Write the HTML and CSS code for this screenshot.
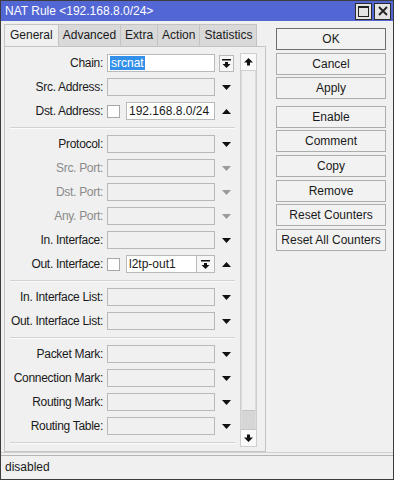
FILE: index.html
```html
<!DOCTYPE html>
<html lang="en">
<head>
    <meta charset="UTF-8">
    <meta name="viewport" content="width=device-width, initial-scale=1.0">
    <title>NAT Rule</title>
    <link rel="stylesheet" href="styles.css">
</head>
<body>
    <div class="window">
        <div class="titlebar">
            <span class="title">NAT Rule &lt;192.168.8.0/24&gt;</span>
            <span class="winbtn"><svg width="11" height="11" viewBox="0 0 11 11"><rect x="0.5" y="0.5" width="10" height="10" fill="none" stroke="#222"/><rect x="0" y="0" width="11" height="2" fill="#222"/></svg></span>
            <span class="winbtn"><svg width="10" height="10" viewBox="0 0 10 10"><path d="M1 1L9 9M9 1L1 9" stroke="#222" stroke-width="1.8"/></svg></span>
        </div>

        <div class="main">
            <div class="left">
                <div class="tabs">
                    <span class="tab active">General</span>
                    <span class="tab">Advanced</span>
                    <span class="tab">Extra</span>
                    <span class="tab">Action</span>
                    <span class="tab">Statistics</span>
                </div>
                <div class="panel">
                    <div class="form">
                        <div class="row">
                            <span class="lbl">Chain:</span>
                            <span class="field white"><span class="sel">srcnat</span></span>
                            <span class="arrow"><span class="ddbtn"><svg width="9" height="9" viewBox="0 0 9 9"><path d="M0 0h9v1.5H0z M3 3h3v2h2.5L4.5 9 0.5 5H3z"/></svg></span></span>
                        </div>
                        <div class="row">
                            <span class="lbl">Src. Address:</span>
                            <span class="field"></span>
                            <span class="arrow"><svg class="tri" width="9" height="5" viewBox="0 0 9 5"><path d="M0 0h9L4.5 5z"/></svg></span>
                        </div>
                        <div class="row">
                            <span class="lbl">Dst. Address:</span>
                            <span class="check"></span>
                            <span class="field white short">192.168.8.0/24</span>
                            <span class="arrow"><svg class="tri" width="9" height="5" viewBox="0 0 9 5"><path d="M0 5h9L4.5 0z"/></svg></span>
                        </div>

                        <div class="sep"></div>

                        <div class="row">
                            <span class="lbl">Protocol:</span>
                            <span class="field"></span>
                            <span class="arrow"><svg class="tri" width="9" height="5" viewBox="0 0 9 5"><path d="M0 0h9L4.5 5z"/></svg></span>
                        </div>
                        <div class="row off">
                            <span class="lbl">Src. Port:</span>
                            <span class="field"></span>
                            <span class="arrow"><svg class="tri" width="9" height="5" viewBox="0 0 9 5"><path d="M0 0h9L4.5 5z"/></svg></span>
                        </div>
                        <div class="row off">
                            <span class="lbl">Dst. Port:</span>
                            <span class="field"></span>
                            <span class="arrow"><svg class="tri" width="9" height="5" viewBox="0 0 9 5"><path d="M0 0h9L4.5 5z"/></svg></span>
                        </div>
                        <div class="row off">
                            <span class="lbl">Any. Port:</span>
                            <span class="field"></span>
                            <span class="arrow"><svg class="tri" width="9" height="5" viewBox="0 0 9 5"><path d="M0 0h9L4.5 5z"/></svg></span>
                        </div>
                        <div class="row">
                            <span class="lbl">In. Interface:</span>
                            <span class="field"></span>
                            <span class="arrow"><svg class="tri" width="9" height="5" viewBox="0 0 9 5"><path d="M0 0h9L4.5 5z"/></svg></span>
                        </div>
                        <div class="row">
                            <span class="lbl">Out. Interface:</span>
                            <span class="check"></span>
                            <span class="field white shorter">l2tp-out1</span>
                            <span class="ddbtn inline"><svg width="9" height="9" viewBox="0 0 9 9"><path d="M0 0h9v1.5H0z M3 3h3v2h2.5L4.5 9 0.5 5H3z"/></svg></span>
                            <span class="arrow"><svg class="tri" width="9" height="5" viewBox="0 0 9 5"><path d="M0 5h9L4.5 0z"/></svg></span>
                        </div>

                        <div class="sep"></div>

                        <div class="row">
                            <span class="lbl">In. Interface List:</span>
                            <span class="field"></span>
                            <span class="arrow"><svg class="tri" width="9" height="5" viewBox="0 0 9 5"><path d="M0 0h9L4.5 5z"/></svg></span>
                        </div>
                        <div class="row">
                            <span class="lbl">Out. Interface List:</span>
                            <span class="field"></span>
                            <span class="arrow"><svg class="tri" width="9" height="5" viewBox="0 0 9 5"><path d="M0 0h9L4.5 5z"/></svg></span>
                        </div>

                        <div class="sep"></div>

                        <div class="row">
                            <span class="lbl">Packet Mark:</span>
                            <span class="field"></span>
                            <span class="arrow"><svg class="tri" width="9" height="5" viewBox="0 0 9 5"><path d="M0 0h9L4.5 5z"/></svg></span>
                        </div>
                        <div class="row">
                            <span class="lbl">Connection Mark:</span>
                            <span class="field"></span>
                            <span class="arrow"><svg class="tri" width="9" height="5" viewBox="0 0 9 5"><path d="M0 0h9L4.5 5z"/></svg></span>
                        </div>
                        <div class="row">
                            <span class="lbl">Routing Mark:</span>
                            <span class="field"></span>
                            <span class="arrow"><svg class="tri" width="9" height="5" viewBox="0 0 9 5"><path d="M0 0h9L4.5 5z"/></svg></span>
                        </div>
                        <div class="row">
                            <span class="lbl">Routing Table:</span>
                            <span class="field"></span>
                            <span class="arrow"><svg class="tri" width="9" height="5" viewBox="0 0 9 5"><path d="M0 0h9L4.5 5z"/></svg></span>
                        </div>

                        <div class="sep"></div>
                    </div>

                    <div class="scrollbar">
                        <span class="sb-btn"><svg width="9" height="8" viewBox="0 0 9 8"><path d="M4.5 0L9 4.5H6V7.5H3V4.5H0z"/></svg></span>
                        <span class="track"><span class="thumb"></span></span>
                        <span class="sb-btn"><svg width="9" height="8" viewBox="0 0 9 8"><path d="M4.5 8L9 3.5H6V0.5H3V3.5H0z"/></svg></span>
                    </div>
                </div>
            </div>

            <div class="buttons">
                <button class="btn default">OK</button>
                <button class="btn">Cancel</button>
                <button class="btn">Apply</button>
                <button class="btn gap">Enable</button>
                <button class="btn">Comment</button>
                <button class="btn">Copy</button>
                <button class="btn">Remove</button>
                <button class="btn">Reset Counters</button>
                <button class="btn">Reset All Counters</button>
            </div>
        </div>

        <div class="status">
            <div class="status-box">disabled</div>
        </div>
    </div>
</body>
</html>
```

FILE: styles.css
```css
body {
    margin: 0;
    background: #f0f0f0;
    font-family: 'Liberation Sans', Arial, sans-serif;
    font-size: 12px;
    color: #1a1a1a;
}
.window {
    width: 394px;
    height: 480px;
    box-sizing: border-box;
    border: 1px solid #3c3c3c;
    background: #f0f0f0;
    display: flex;
    flex-direction: column;
}
.titlebar {
    height: 20px;
    flex: none;
    background: #5266d4;
    color: #fff;
    display: flex;
    align-items: center;
    padding: 0 2px 0 4px;
    font-size: 12px;
}
.title {
    flex: 1;
}
.winbtn {
    width: 15px;
    height: 15px;
    margin-left: 2px;
    background: #e4e4e4;
    border: 1px solid #2a2a2a;
    display: flex;
    align-items: center;
    justify-content: center;
}
.main {
    flex: 1;
    display: flex;
    gap: 10px;
    padding: 3px 0 0 3px;
    min-height: 0;
}
.left {
    width: 262px;
    display: flex;
    flex-direction: column;
}
.tabs {
    display: flex;
    height: 22px;
    flex: none;
}
.tab {
    padding: 0 4px;
    line-height: 21px;
    background: #d9d9d9;
    border: 1px solid #c4c4c4;
    border-bottom: none;
    border-left: none;
}
.tab.active {
    background: #f0f0f0;
    border-left: 1px solid #c4c4c4;
    padding: 0 5px;
}
.panel {
    flex: 1;
    display: flex;
    border: 1px solid #c4c4c4;
    padding: 4px 8px 0 0;
    min-height: 0;
}
.form {
    width: 234px;
}
.row {
    height: 24px;
    display: flex;
    align-items: center;
}
.lbl {
    width: 98px;
    margin-right: 4px;
    text-align: right;
    white-space: nowrap;
    letter-spacing: -0.3px;
}
.field {
    width: 108px;
    height: 18px;
    box-sizing: border-box;
    border: 1px solid #b9b9b9;
    background: #f0f0f0;
    padding: 0 2px;
    line-height: 16px;
    overflow: hidden;
    white-space: nowrap;
}
.field.white {
    background: #fff;
}
.field.short {
    width: 89px;
}
.field.shorter {
    width: 71px;
}
.sel {
    background: #3390ea;
    color: #fff;
    padding: 0 1px;
}
.check {
    width: 13px;
    height: 13px;
    box-sizing: border-box;
    border: 1px solid #a8a8a8;
    background: #fff;
    margin-right: 6px;
}
.arrow {
    width: 22px;
    height: 18px;
    display: flex;
    align-items: center;
    justify-content: center;
}
.tri {
    fill: #111;
}
.off .lbl {
    color: #8a8a8a;
}
.off .tri {
    fill: #9a9a9a;
}
.ddbtn {
    width: 15px;
    height: 17px;
    box-sizing: border-box;
    border: 1px solid #b9b9b9;
    background: #f6f6f6;
    display: flex;
    align-items: center;
    justify-content: center;
}
.ddbtn svg {
    fill: #111;
}
.ddbtn.inline {
    width: 18px;
    height: 18px;
    border-left: none;
}
.sep {
    height: 9px;
    box-sizing: border-box;
    padding-top: 4px;
    margin: 0 4px 0 5px;
}
.sep::before {
    content: "";
    display: block;
    border-top: 1px solid #d2d2d2;
    border-bottom: 1px solid #fbfbfb;
}
.scrollbar {
    width: 17px;
    margin: 2px 0 4px 1px;
    display: flex;
    flex-direction: column;
    border: 1px solid #cfcfcf;
    box-sizing: border-box;
}
.sb-btn {
    height: 16px;
    flex: none;
    background: #fafafa;
    display: flex;
    align-items: center;
    justify-content: center;
    border-bottom: 1px solid #d0d0d0;
}
.sb-btn:last-child {
    border-bottom: none;
    border-top: 1px solid #c6c6c6;
}
.sb-btn svg {
    fill: #111;
}
.track {
    flex: 1;
    display: flex;
    flex-direction: column;
    justify-content: flex-end;
    background: #f0f0f0;
    border-left: 1px solid #dcdcdc;
    border-right: 1px solid #dcdcdc;
}
.thumb {
    height: 18px;
    background: #d6d6d6;
    border-top: 1px solid #c4c4c4;
}
.buttons {
    width: 110px;
    padding-top: 4px;
    display: flex;
    flex-direction: column;
}
.btn {
    height: 22px;
    margin-bottom: 2.6px;
    border: 1px solid #adadad;
    background: #f2f2f2;
    font-family: inherit;
    font-size: 12px;
    color: #1a1a1a;
    padding: 0;
}
.btn.default {
    border-color: #6e6e6e;
}
.btn.gap {
    margin-top: 4px;
}
.status {
    height: 27px;
    flex: none;
    box-sizing: border-box;
    border-top: 1px solid #cfcfcf;
    padding-top: 2px;
}
.status-box {
    height: 24px;
    box-sizing: border-box;
    border-top: 1px solid #b4b4b4;
    line-height: 22px;
    padding-left: 4px;
    font-size: 12px;
}
```
